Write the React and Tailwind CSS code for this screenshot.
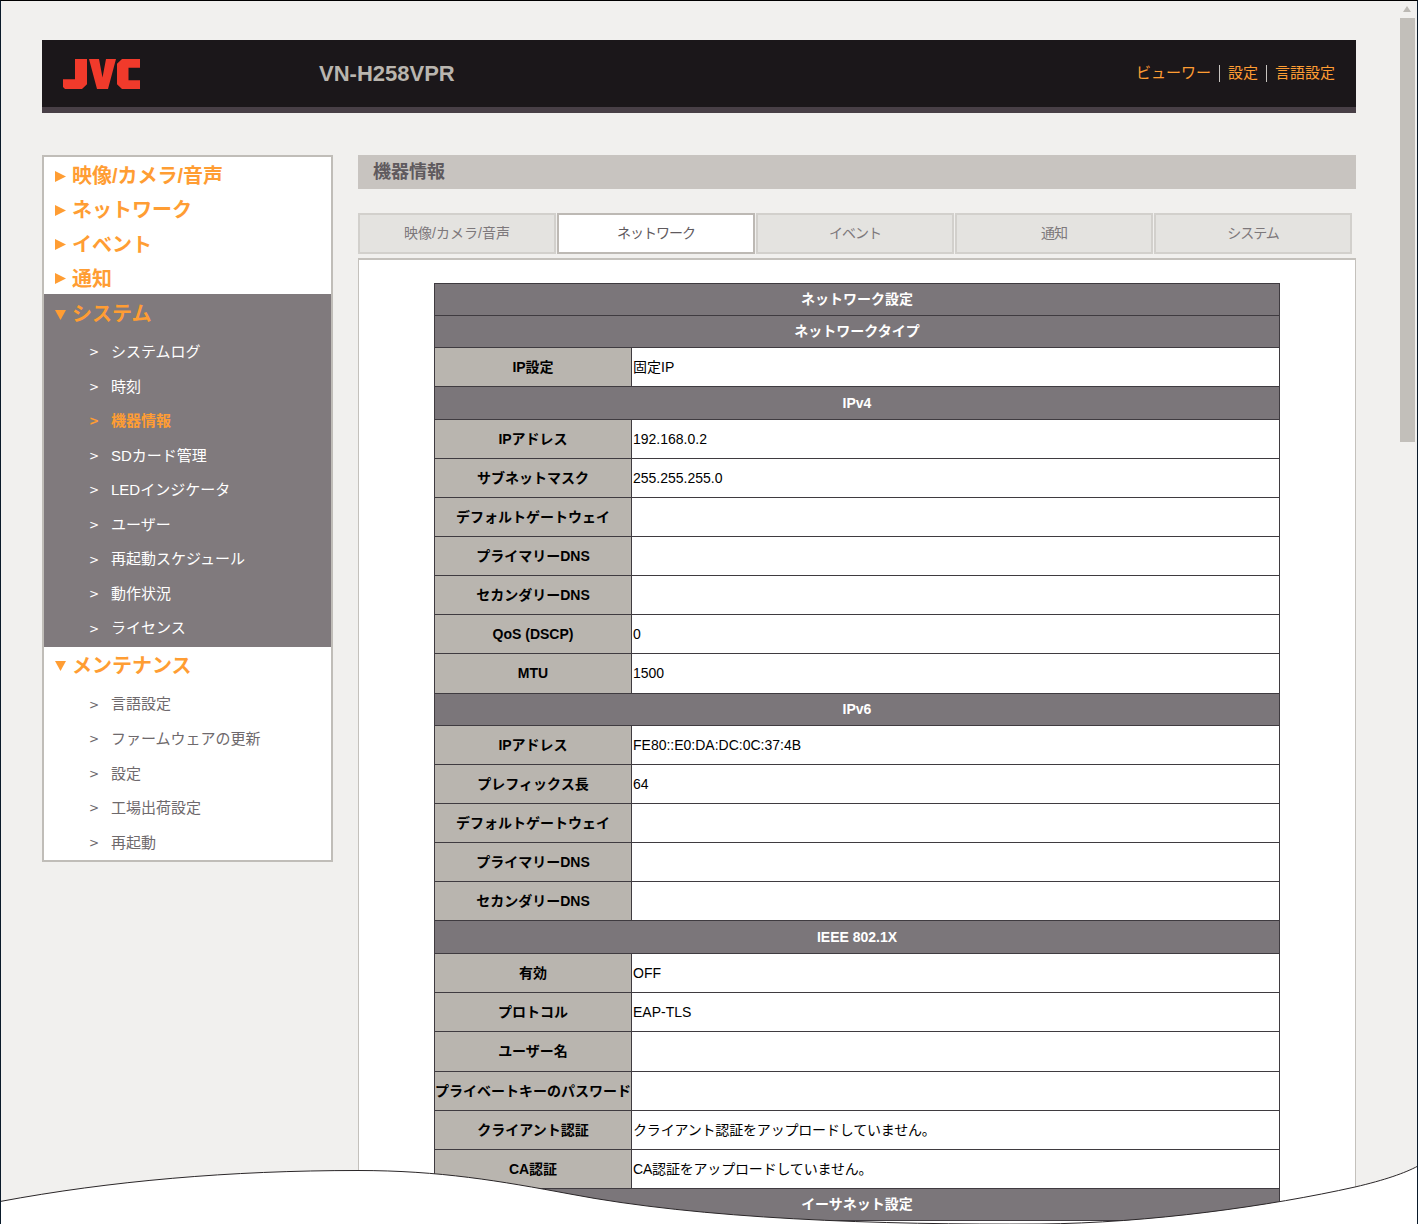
const FONT = "font-['Liberation_Sans','Noto_Sans_CJK_JP',sans-serif]";

const topNav = ["映像/カメラ/音声", "ネットワーク", "イベント", "通知"];
const systemItems = ["システムログ", "時刻", "機器情報", "SDカード管理", "LEDインジケータ", "ユーザー", "再起動スケジュール", "動作状況", "ライセンス"];
const maintItems = ["言語設定", "ファームウェアの更新", "設定", "工場出荷設定", "再起動"];
const tabs = ["映像/カメラ/音声", "ネットワーク", "イベント", "通知", "システム"];

// h = row height, head = dark section row
const rows = [
  { head: "ネットワーク設定", h: 32 },
  { head: "ネットワークタイプ", h: 32 },
  { k: "IP設定", v: "固定IP", h: 39 },
  { head: "IPv4", h: 33 },
  { k: "IPアドレス", v: "192.168.0.2", h: 39 },
  { k: "サブネットマスク", v: "255.255.255.0", h: 39 },
  { k: "デフォルトゲートウェイ", v: "", h: 39 },
  { k: "プライマリーDNS", v: "", h: 39 },
  { k: "セカンダリーDNS", v: "", h: 39 },
  { k: "QoS (DSCP)", v: "0", h: 39 },
  { k: "MTU", v: "1500", h: 40 },
  { head: "IPv6", h: 32 },
  { k: "IPアドレス", v: "FE80::E0:DA:DC:0C:37:4B", h: 39 },
  { k: "プレフィックス長", v: "64", h: 39 },
  { k: "デフォルトゲートウェイ", v: "", h: 39 },
  { k: "プライマリーDNS", v: "", h: 39 },
  { k: "セカンダリーDNS", v: "", h: 39 },
  { head: "IEEE 802.1X", h: 33 },
  { k: "有効", v: "OFF", h: 39 },
  { k: "プロトコル", v: "EAP-TLS", h: 39 },
  { k: "ユーザー名", v: "", h: 40 },
  { k: "プライベートキーのパスワード", v: "", h: 39 },
  { k: "クライアント認証", v: "クライアント認証をアップロードしていません。", h: 39, tight: true },
  { k: "CA認証", v: "CA認証をアップロードしていません。", h: 39, tight: true },
  { head: "イーサネット設定", h: 32 },
];

const Tri = ({ down }) => (
  <svg width="11" height="11" viewBox="0 0 11 11" className="shrink-0">
    <polygon points={down ? "0,1 11,1 5.5,11" : "0,0 11,5.5 0,11"} fill="#ff9d33" />
  </svg>
);

const Major = ({ label, down, className }) => (
  <div className={"flex items-center gap-[6px] pl-[11px] text-[20px] font-bold text-[#ff9d33] " + className}>
    <Tri down={down} />
    <span className="whitespace-nowrap">{label}</span>
  </div>
);

const Sub = ({ label, color, bold }) => (
  <div className={"flex h-[34.55px] items-center pl-[45px] text-[15px] " + color + (bold ? " font-bold" : "")}>
    <span className="w-[22px] shrink-0 font-['DejaVu_Sans',sans-serif] text-[12px]">&gt;</span>
    <span className="whitespace-nowrap">{label}</span>
  </div>
);

const Logo = () => (
  <svg width="77" height="30" viewBox="0 0 77 31" preserveAspectRatio="none" className="ml-[21px] mt-[1px] shrink-0">
    <g fill="#f13a2b">
      <path d="M12 0H24V26L19 31H2L0 29V21H12Z" />
      <path d="M26 0H36L39.5 19L43 0H53L45 31H34Z" />
      <path d="M59 0H77V9H65.5V22H77V31H59L54 26V5Z" />
    </g>
  </svg>
);

export default function App() {
  return (
    <div className={"relative h-[1224px] w-[1418px] overflow-hidden border-x border-t border-x-[#0a1a2a] border-t-black bg-[#f1f0ee] " + FONT}>
      <div className="ml-[41px] mr-[61px] pt-[39px]">
        <header className="border-b-[6px] border-[#483f46] bg-[#1b171a]">
          <div className="flex h-[67px] items-center">
            <Logo />
            <div className="ml-[179px] text-[22px] font-bold text-[#b9b5af]">VN-H258VPR</div>
            <div className="ml-auto mr-[21px] flex items-center text-[15px] text-[#ff9d33]">
              <span>ビューワー</span>
              <span className="mx-[8px] h-[17px] w-px bg-[#c8c4c0]" />
              <span>設定</span>
              <span className="mx-[8px] h-[17px] w-px bg-[#c8c4c0]" />
              <span>言語設定</span>
            </div>
          </div>
        </header>

        <div className="mt-[42px] flex items-start gap-[25px]">
          <aside className="w-[291px] shrink-0 border-2 border-[#c0bdb8] bg-white">
            {topNav.map((n) => (
              <Major key={n} label={n} className="h-[34.25px] pt-[4px]" />
            ))}
            <div className="bg-[#807a7d] pb-px">
              <Major label="システム" down className="h-[38px] pt-[2px]" />
              <div className="pt-[3px]">
                {systemItems.map((s) => (
                  <Sub key={s} label={s} bold={s === "機器情報"} color={s === "機器情報" ? "text-[#ff9d33]" : "text-white"} />
                ))}
              </div>
            </div>
            <Major label="メンテナンス" down className="h-[35.5px] pt-[2px]" />
            <div className="pt-[5px]">
              {maintItems.map((s) => (
                <Sub key={s} label={s} color="text-[#6e696c]" />
              ))}
            </div>
          </aside>

          <main className="min-w-0 flex-1">
            <div className="flex h-[34px] items-center bg-[#c8c4c0] pl-[15px] text-[18px] font-bold text-[#5f5a5e]">機器情報</div>
            <div className="mt-[24px] flex w-[994px] gap-px">
              {tabs.map((t, i) =>
                i === 0 ? (
                  <div key={t} className="flex h-[41px] flex-1 items-center justify-center border-2 border-[#d2d0cc] bg-[#e4e3e0] text-[14px] text-[#7d787b]">{t}</div>
                ) : i === 1 ? (
                  <div key={t} className="flex h-[41px] flex-1 items-center justify-center border-2 border-[#bdb9b4] bg-white text-[14px] tracking-[-1px] text-[#5f5a5e]">{t}</div>
                ) : (
                  <div key={t} className="flex h-[41px] flex-1 items-center justify-center border-2 border-[#d2d0cc] bg-[#e4e3e0] text-[14px] tracking-[-1px] text-[#7d787b]">{t}</div>
                )
              )}
            </div>
            <div className="mt-[4px] border-x border-t-2 border-[#c4c1bc] bg-white px-[75px] pt-[23px] pb-[40px]">
              <table className="w-[846px] table-fixed border-collapse text-[14px]">
                <colgroup>
                  <col className="w-[197px]" />
                  <col />
                </colgroup>
                <tbody>
                  {rows.map((r, i) =>
                    r.head ? (
                      <tr key={i} style={{ height: r.h }}>
                        <th colSpan={2} className="border border-[#3f3b40] bg-[#7b767a] p-0 text-center text-[14px] font-bold text-white">{r.head}</th>
                      </tr>
                    ) : (
                      <tr key={i} style={{ height: r.h }}>
                        <th className="whitespace-nowrap border border-[#3f3b40] bg-[#b9b5af] p-0 text-center font-bold text-black">{r.k}</th>
                        <td className={"border border-[#3f3b40] bg-white p-0 pl-px text-black" + (r.tight ? " tracking-[-0.18px]" : "")}>{r.v}</td>
                      </tr>
                    )
                  )}
                </tbody>
              </table>
            </div>
          </main>
        </div>
      </div>

      {/* fake scrollbar */}
      <div className="absolute left-[1402px] top-[5px] h-0 w-0 border-x-[4.5px] border-b-[6px] border-x-transparent border-b-[#bcb9b4]" />
      <div className="absolute left-[1399px] top-[17px] h-[424px] w-[15px] bg-[#c2bfba]" />

      {/* torn page edge */}
      <svg className="absolute left-[-1px] top-[1120px]" width="1418" height="104" viewBox="0 1120 1418 104">
        <path
          d="M0 1200.5C110 1180 230 1169.5 358 1169.5C440 1169.5 500 1180 570 1193C700 1218 880 1224 1040 1223C1150 1222 1270 1205 1355 1186C1385 1179 1405 1172 1418 1165V1224H0Z"
          fill="#fff"
          stroke="#2a2628"
          strokeWidth="1"
        />
      </svg>
    </div>
  );
}
